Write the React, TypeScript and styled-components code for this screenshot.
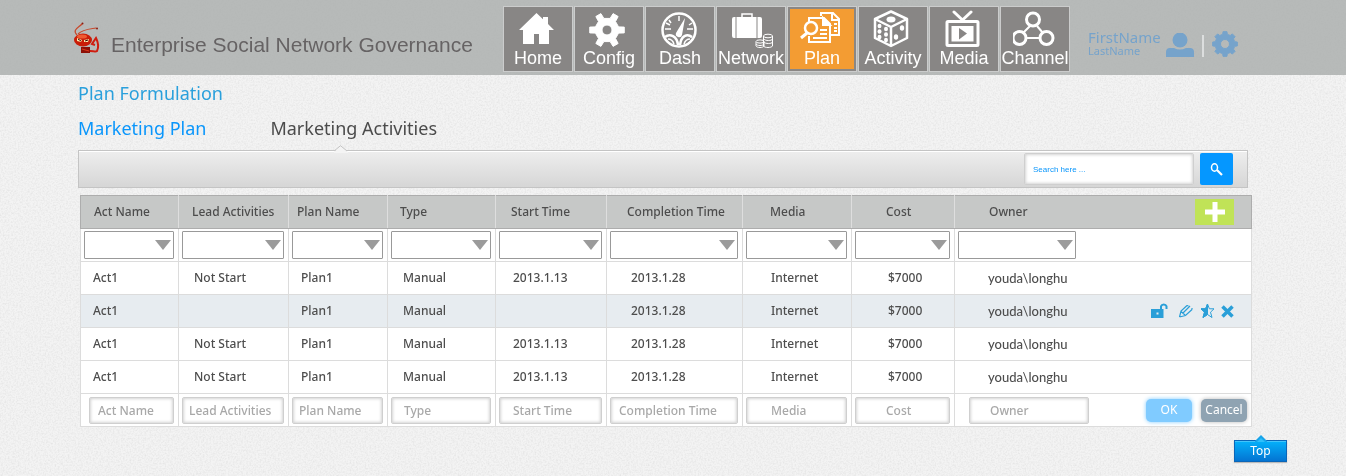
import React from "react";
import styled, { createGlobalStyle, css } from "styled-components";

const ui = `"Noto Sans", "Open Sans", sans-serif`;
const arial = `"Liberation Sans", Arial, sans-serif`;

const GlobalStyle = createGlobalStyle`
  *, *::before, *::after { box-sizing: border-box; }
  body { margin: 0; background: #f3f3f3; font-family: ${ui}; color: #4d4d4d; }
  button, input, select { font: inherit; color: inherit; margin: 0; }
  button { cursor: pointer; }
`;

const Page = styled.div`
  isolation: isolate;
`;

const GrainLayer = styled.svg`
  position: fixed;
  inset: 0;
  width: 100%;
  height: 100%;
  z-index: -1;
`;

const Header = styled.header`
  display: flex;
  align-items: flex-start;
  gap: 18px;
  height: 75px;
  padding: 6px 108px 0 72px;
  background: rgba(170, 173, 172, 0.82);
`;

const Brand = styled.div`
  display: flex;
  flex: 1;
  gap: 8px;
  padding-top: 14px;
`;

const BrandName = styled.span`
  padding-top: 12px;
  font: 21px/26px ${arial};
  color: #666364;
  white-space: nowrap;
`;

const Nav = styled.nav`
  display: flex;
  gap: 1px;
`;

const NavTile = styled.a<{ $active?: boolean }>`
  display: flex;
  flex-direction: column;
  align-items: center;
  width: 70px;
  height: 66px;
  padding-top: 3px;
  border: 1px solid #cbcccc;
  background: #888685;
  color: #fff;
  font: 18px/20px ${arial};
  text-decoration: none;
  white-space: nowrap;
  ${(p) =>
    p.$active &&
    css`
      background: #f39c33;
      box-shadow: inset 0 0 0 2px #8a8785;
    `}
`;

const User = styled.div`
  display: flex;
  align-items: flex-end;
  height: 51px;
  color: #76a3cb;
`;

const UserName = styled.div`
  display: flex;
  flex-direction: column;
  width: 78px;
  font-size: 15px;
  line-height: 16px;
`;

const LastName = styled.span`
  font-size: 11px;
  line-height: 12px;
`;

const Divider = styled.span`
  width: 2px;
  height: 22px;
  margin: 0 8px;
  background: #dcdede;
`;

const IconButton = styled.button`
  display: flex;
  padding: 0;
  border: 0;
  background: none;
  color: inherit;
`;

const Main = styled.main`
  padding: 6px 94px 0 78px;
`;

const Title = styled.h1`
  margin: 0 0 11px;
  font-size: 18px;
  line-height: 24px;
  font-weight: 400;
  color: #2aa0dc;
`;

const Tabs = styled.nav`
  display: flex;
  gap: 64px;
  margin-bottom: 10px;
`;

const Tab = styled.a<{ $active?: boolean }>`
  font-size: 18px;
  line-height: 24px;
  color: ${(p) => (p.$active ? "#0a96fb" : "#4b4b4b")};
  text-decoration: none;
`;

const Toolbar = styled.form`
  position: relative;
  display: flex;
  justify-content: flex-end;
  gap: 6px;
  height: 38px;
  margin: 0 4px 7px 0;
  padding: 2px 14px 0 0;
  border: 1px solid #c4c4c4;
  background: linear-gradient(#eeeeee, #d6d6d6);
  box-shadow: inset 0 1px 0 #fff;
`;

const Caret = styled.svg`
  position: absolute;
  left: 255px;
  top: -6px;
`;

const inset = css`
  border: 1px solid #cfcfcf;
  border-radius: 2px;
  background: #fff;
  box-shadow: inset 0 0 3px 1px #d4d4d4;
  outline: 0;
`;

const SearchBox = styled.input`
  ${inset}
  width: 170px;
  height: 32px;
  padding: 0 8px;
  font: 8px/12px ${arial};
  &::placeholder { color: #0a96fb; opacity: 1; }
`;

const SearchButton = styled.button`
  display: flex;
  align-items: center;
  justify-content: center;
  width: 33px;
  height: 32px;
  padding: 0;
  border: 0;
  border-radius: 2px;
  background: #0597ff;
`;

const Grid = styled.table`
  width: calc(100% - 2px);
  margin-left: 2px;
  table-layout: fixed;
  border-collapse: collapse;
  background: #fff;
  font-size: 12px;
  line-height: 16px;
`;

const HeadCell = styled.th<{ $indent: number }>`
  height: 33px;
  padding: 0 0 0 ${(p) => p.$indent}px;
  border: 1px solid #dedede;
  border-top-color: #adadad;
  border-bottom-color: #adadad;
  background: #c6c8c7;
  font-weight: 500;
  text-align: left;
  white-space: nowrap;
  &:first-child { border-left-color: #adadad; }
  &:last-child { border-right-color: #adadad; }
`;

const Cell = styled.td<{ $indent?: number }>`
  height: 33px;
  padding: 0 0 0 ${(p) => p.$indent ?? 3}px;
  border: 1px solid #dcdcdc;
  font-weight: 500;
  white-space: nowrap;
`;

const Row = styled.tr<{ $selected?: boolean }>`
  background: ${(p) => (p.$selected ? "#e7ecf0" : "#fff")};
`;

const Spread = styled.div<{ $end: number }>`
  display: flex;
  align-items: center;
  justify-content: space-between;
  padding-right: ${(p) => p.$end}px;
`;

const Owner = styled.span`
  font-family: Lato, sans-serif;
  font-size: 13px;
`;

const Actions = styled.div`
  display: flex;
  align-items: center;
  gap: 6px;
  color: #2a9fd8;
`;

const AddButton = styled.button`
  display: flex;
  align-items: center;
  justify-content: center;
  width: 39px;
  height: 26px;
  padding: 0;
  border: 0;
  background: #c0e357;
`;

const SelectWrap = styled.div<{ $fixed?: boolean }>`
  position: relative;
  width: ${(p) => (p.$fixed ? "118px" : "calc(100% - 4px)")};
  &::after {
    content: "";
    position: absolute;
    right: 3px;
    top: 9px;
    border: 8px solid transparent;
    border-top: 10px solid #9b9b9b;
    border-bottom: 0;
    pointer-events: none;
  }
`;

const Filter = styled.select`
  display: block;
  width: 100%;
  height: 28px;
  border: 1px solid #999;
  border-radius: 1px;
  background: #fff;
  appearance: none;
`;

const EntryBox = styled.input<{ $indent: number; $fixed?: boolean }>`
  ${inset}
  display: block;
  width: ${(p) => (p.$fixed ? "120px" : "calc(100% - 4px)")};
  height: 27px;
  padding: 0 0 0 ${(p) => p.$indent}px;
  &::placeholder { color: #a8a8a8; opacity: 1; }
`;

const FormActions = styled.div`
  display: flex;
  gap: 9px;
`;

const FormButton = styled.button<{ $primary?: boolean }>`
  width: 46px;
  height: 23px;
  padding: 0;
  border: 0;
  border-radius: 5px;
  background: ${(p) => (p.$primary ? "#80cbff" : "#8fa3b2")};
  box-shadow: 0 0 4px ${(p) => (p.$primary ? "#80cbff" : "#b9b9b9")};
  color: #fff;
  font-size: 12px;
  line-height: 16px;
  font-weight: 400;
`;

const Footer = styled.footer`
  display: flex;
  justify-content: flex-end;
  padding: 8px 59px 14px 0;
`;

const TopLink = styled.a`
  display: flex;
  flex-direction: column;
  align-items: center;
  width: 53px;
  color: #fff;
  font-size: 12px;
  line-height: 20px;
  text-align: center;
  text-decoration: none;
`;

const TopLabel = styled.span`
  width: 100%;
  border: 1px solid #0b66b8;
  background: linear-gradient(#04b1fb, #0474d2);
  box-shadow: inset 0 1px 0 #43c4fb, 0 1px 1px #bbb;
`;

const TopCaret = styled.svg`
  position: relative;
  z-index: 1;
  margin-bottom: -2px;
`;

function gearPath(cx: number, cy: number, teeth: number, outer: number, inner: number, hole: number, tip: number, root: number) {
  const points: string[] = [];
  const step = (Math.PI * 2) / teeth;
  for (let i = 0; i < teeth; i++) {
    const mid = i * step;
    [[inner, -root], [outer, -tip], [outer, tip], [inner, root]].forEach(([r, a]) => {
      points.push(`${(cx + r * Math.cos(mid + a * step)).toFixed(2)} ${(cy + r * Math.sin(mid + a * step)).toFixed(2)}`);
    });
  }
  return `M${points.join("L")}ZM${cx - hole} ${cy}a${hole} ${hole} 0 1 0 ${hole * 2} 0a${hole} ${hole} 0 1 0 ${-hole * 2} 0Z`;
}

const HomeIcon = () => (
  <path fill="#fff" d="M3 20 20.500 3l6.500 6.300V7h5v7l6 6h-5v14H23V24h-5v10H7V20Z" />
);
const ConfigIcon = () => (
  <path fill="#fff" stroke="#fff" strokeLinejoin="round" fillRule="evenodd" d={gearPath(20, 20, 6, 17.5, 12, 5, 0.16, 0.25)} />
);
const DashIcon = () => (
  <g fill="none" stroke="#fff" strokeWidth="2">
    <circle cx="21" cy="20" r="16.500" strokeWidth="2.500" />
    <path d="M21 6v5M11 10l2 3M7 19h6M29 19h6M8 13l4 2M31 26l3 1M31 15l3-2" strokeWidth="1.500" />
    <path fill="#fff" stroke="none" d="M27 8 24 25a3 3 0 0 1-6-2Z" />
    <path d="M7 27c5-4 12-1 13 8M34 27c-5-4-11-1-12 8" strokeWidth="2.500" />
    <path d="M10 29c3 0 5 2 6 5M32 29c-3 0-5 2-6 5" strokeWidth="1.500" />
  </g>
);
const NetworkIcon = () => (
  <g fill="#fff">
    <path fill="none" stroke="#fff" strokeWidth="1.500" d="M13 8V4h10v4" />
    <path d="M5 7h1.500v21H5a2 2 0 0 1-2-2V9a2 2 0 0 1 2-2ZM7.500 7h20v21h-20ZM28.500 7H31a2 2 0 0 1 2 2v17a2 2 0 0 1-2 2h-2.500Z" />
    <path fill="#888685" d="M33 22h11v16H26v-9h7Z" />
    <g fill="none" stroke="#fff">
      <ellipse cx="39" cy="26" rx="4.500" ry="1.800" />
      <path d="M34.500 26v10c1 2 8 2 9 0V26M35 29c1 2 8 2 8.500 0M35 32c1 2 8 2 8.500 0" />
      <ellipse cx="31" cy="31.500" rx="4" ry="1.600" />
      <path d="M27 32v4c1 2 7 2 8 0v-4M27 34c1 2 7 2 8 0" />
    </g>
  </g>
);
const PlanIcon = () => (
  <g fill="none" stroke="#fff" strokeWidth="2">
    <path d="M21 6V3h12l6 6v16h-8M32 3v7h7M34 14h3M34 18h3M34 21h3" />
    <path fill="#f39c33" d="M9 14V8h15l6 6v18H9v-6" />
    <path fill="#fff" d="M23 8v7h7Z" />
    <path d="M20 20h7M20 24h7M13 28h14" strokeWidth="1.800" />
    <circle fill="#f39c33" cx="11" cy="18" r="6" strokeWidth="2.500" />
    <path d="m7 23-6 5" strokeWidth="3" />
  </g>
);
const ActivityIcon = () => (
  <g>
    <path fill="none" stroke="#fff" strokeWidth="2.500" strokeLinejoin="round" d="M20 1.500 36 9v19l-16 8L4 28V9ZM4 9l16 8 16-8M20 17v19" />
    <g fill="#fff">
      <ellipse cx="20" cy="9.500" rx="4.500" ry="3" />
      <ellipse cx="8.500" cy="16" rx="2" ry="2.200" /><ellipse cx="15" cy="19" rx="2" ry="2.200" />
      <ellipse cx="8.500" cy="21.500" rx="2" ry="2.200" /><ellipse cx="15" cy="24.500" rx="2" ry="2.200" />
      <ellipse cx="8.500" cy="27" rx="2" ry="2.200" /><ellipse cx="15" cy="30" rx="2" ry="2.200" />
      <ellipse cx="31" cy="18" rx="2.200" ry="2.800" /><ellipse cx="25" cy="27" rx="2.200" ry="2.800" />
    </g>
  </g>
);
const MediaIcon = () => (
  <g fill="none" stroke="#fff" strokeWidth="3">
    <path d="m12 2 8.500 8L29 2" strokeLinecap="round" />
    <rect x="5" y="11.500" width="31" height="24" rx="1" />
    <rect x="9.500" y="16" width="22" height="15.500" fill="#fff" stroke="none" />
    <path fill="#888685" stroke="none" d="m17 18 8 5.500-8 6Z" />
  </g>
);
const ChannelIcon = () => (
  <g fill="none" stroke="#fff" strokeWidth="3">
    <path d="m17 16-7 7M24 16l6 7M13 28h14" strokeWidth="2" />
    <circle cx="20" cy="9.500" r="6.500" /><circle cx="6.500" cy="28" r="6.500" /><circle cx="33.500" cy="28" r="6.500" />
  </g>
);

const navItems = [
  { label: "Home", Icon: HomeIcon },
  { label: "Config", Icon: ConfigIcon },
  { label: "Dash", Icon: DashIcon },
  { label: "Network", Icon: NetworkIcon },
  { label: "Plan", Icon: PlanIcon, active: true },
  { label: "Activity", Icon: ActivityIcon },
  { label: "Media", Icon: MediaIcon },
  { label: "Channel", Icon: ChannelIcon },
];

const columns = [
  { label: "Act Name", width: 98, head: 13, body: 12, lead: 8, entry: 8 },
  { label: "Lead Activities", width: 110, head: 13, body: 15, lead: 3, entry: 6 },
  { label: "Plan Name", width: 99, head: 8, body: 12, lead: 3, entry: 6 },
  { label: "Type", width: 108, head: 12, body: 15, lead: 3, entry: 12 },
  { label: "Start Time", width: 111, head: 15, body: 17, lead: 3, entry: 13 },
  { label: "Completion Time", width: 136, head: 20, body: 24, lead: 3, entry: 8 },
  { label: "Media", width: 109, head: 27, body: 28, lead: 3, entry: 24 },
  { label: "Cost", width: 103, head: 34, body: 36, lead: 3, entry: 30 },
];

const rows = [
  ["Act1", "Not Start", "Plan1", "Manual", "2013.1.13", "2013.1.28", "Internet", "$7000"],
  ["Act1", "", "Plan1", "Manual", "", "2013.1.28", "Internet", "$7000"],
  ["Act1", "Not Start", "Plan1", "Manual", "2013.1.13", "2013.1.28", "Internet", "$7000"],
  ["Act1", "Not Start", "Plan1", "Manual", "2013.1.13", "2013.1.28", "Internet", "$7000"],
];

const Logo = () => (
  <svg width="31" height="36" viewBox="0 0 31 36" fill="none" aria-hidden="true">
    <path d="M5 15c-5-5 1-7 5-11M6 14c5-5 12-5 18-6" stroke="#c8492c" strokeWidth="1.200" />
    <circle cx="10.500" cy="3.500" r="1" fill="#8c1c10" /><circle cx="25" cy="8.500" r="1" fill="#8c1c10" />
    <ellipse cx="11" cy="20" rx="9" ry="6.500" fill="#c91d08" />
    <ellipse cx="10" cy="16.500" rx="5" ry="2" fill="#ef5a31" />
    <path d="m5 18 5 2-1 2-4-1ZM12 20l5-1-1 3h-4Z" fill="#ffe7a8" />
    <path d="m6 19 3 2M13 21l3-1" stroke="#3a0805" />
    <path d="M9 27h9v6H9Z" fill="#8d1007" /><path d="m10 29 7 2" stroke="#e43b1c" />
    <path d="M18 31c3 0 6 1 7 0 2-4 1-9-1-13l-4 6 3 1" stroke="#cf1d10" strokeWidth="2" />
  </svg>
);

const RowActions = () => (
  <Actions>
    <IconButton type="button" aria-label="Unlock">
      <svg width="21" height="18" viewBox="0 0 21 18"><path fill="currentColor" fillRule="evenodd" d="M0 7h9V4a4 4 0 0 1 7.500 0v3h-2V4.500a2 2 0 0 0-3.500 0V7h1.500v9H0Zm5.500 3.500v2h2v-2Z" /></svg>
    </IconButton>
    <IconButton type="button" aria-label="Edit">
      <svg width="16" height="16" viewBox="0 0 16 16" fill="none" stroke="currentColor" strokeWidth="1.200"><path d="m1.500 14 1.500-6 6-5.500M1.500 14l6-1.500 6.500-6M5 10l7-7M9 2.500l1.500.5M14 6.500V5M3 8.500 7 12" /></svg>
    </IconButton>
    <IconButton type="button" aria-label="Favourite">
      <svg width="15" height="16" viewBox="0 0 15 16" stroke="currentColor" fill="none"><path d="m7.500 1 1.900 4.800H14l-3.500 3.400L12 14.500l-4.500-3-4.500 3 1.500-5.300L1 5.800h4.600Z" /><path fill="currentColor" d="M7.500 1v10.500l-4.500 3 1.500-5.300L1 5.800h4.600Z" /></svg>
    </IconButton>
    <IconButton type="button" aria-label="Delete">
      <svg width="13" height="13" viewBox="0 0 13 13" stroke="currentColor" strokeWidth="3.500"><path d="m1.500 1.500 10 10M11.500 1.500l-10 10" /></svg>
    </IconButton>
  </Actions>
);

export default function App() {
  return (
    <Page id="top">
      <GlobalStyle />
      <GrainLayer aria-hidden="true">
        <filter id="grain" x="0" y="0" width="100%" height="100%">
          <feTurbulence type="fractalNoise" baseFrequency="0.6" numOctaves="2" seed="4" />
          <feColorMatrix values="0 0 0 0 0.5  0 0 0 0 0.5  0 0 0 0 0.5  0.5 0 0 0 -0.2" />
        </filter>
        <rect width="100%" height="100%" filter="url(#grain)" />
      </GrainLayer>
      <Header>
        <Brand>
          <Logo />
          <BrandName>Enterprise Social Network Governance</BrandName>
        </Brand>
        <Nav aria-label="Main">
          {navItems.map(({ label, Icon, active }) => (
            <NavTile key={label} href="#top" $active={active} aria-current={active ? "page" : undefined}>
              <svg width="44" height="38" viewBox="0 0 44 38" aria-hidden="true"><Icon /></svg>
              {label}
            </NavTile>
          ))}
        </Nav>
        <User>
          <UserName>
            FirstName
            <LastName>LastName</LastName>
          </UserName>
          <IconButton type="button" aria-label="Profile">
            <svg width="28" height="24" viewBox="0 0 28 24"><circle cx="14" cy="7" r="7.500" fill="#76a3cb" /><path fill="#76a3cb" d="M0 24v-5a4 4 0 0 1 4-4h4q6 3 12 0h4a4 4 0 0 1 4 4v5Z" /></svg>
          </IconButton>
          <Divider />
          <IconButton type="button" aria-label="Settings">
            <svg width="26" height="26" viewBox="0 0 26 26"><path fill="#76a3cb" stroke="#76a3cb" strokeLinejoin="round" fillRule="evenodd" d={gearPath(13, 13, 8, 12.5, 10, 4.5, 0.2, 0.3)} /></svg>
          </IconButton>
        </User>
      </Header>
      <Main>
        <Title>Plan Formulation</Title>
        <Tabs aria-label="Plans">
          <Tab href="#top" $active>Marketing Plan</Tab>
          <Tab href="#top">Marketing Activities</Tab>
        </Tabs>
        <Toolbar onSubmit={(e) => e.preventDefault()}>
          <Caret width="14" height="8" viewBox="0 0 14 8" aria-hidden="true"><path d="M0 7 7 .7 14 7v1H0Z" fill="#f4f4f4" /><path d="M0 6 6.500.7 13 6" fill="none" stroke="#c4c4c4" /></Caret>
          <SearchBox type="text" aria-label="Search" placeholder="Search here ..." />
          <SearchButton type="submit" aria-label="Search">
            <svg width="13" height="13" viewBox="0 0 13 13" fill="none" stroke="#fff"><ellipse cx="4.500" cy="4.500" rx="3" ry="3.700" strokeWidth="1.500" /><path d="m7 7 5 5" strokeWidth="2.200" /></svg>
          </SearchButton>
        </Toolbar>
        <Grid>
          <colgroup>
            {columns.map((c) => <col key={c.label} width={c.width} />)}
            <col />
          </colgroup>
          <thead>
            <tr>
              {columns.map((c) => <HeadCell key={c.label} scope="col" $indent={c.head}>{c.label}</HeadCell>)}
              <HeadCell scope="col" $indent={34}>
                <Spread $end={17}>
                  Owner
                  <AddButton type="button" aria-label="Add activity">
                    <svg width="20" height="20" viewBox="0 0 20 20"><path fill="#fff" d="M7.500 0h5v7.500H20v5h-7.500V20h-5v-7.500H0v-5h7.500Z" /></svg>
                  </AddButton>
                </Spread>
              </HeadCell>
            </tr>
          </thead>
          <tbody>
            <Row>
              {[...columns.map((c) => c.label), "Owner"].map((label) => (
                <Cell key={label}>
                  <SelectWrap $fixed={label === "Owner"}>
                    <Filter aria-label={`Filter by ${label}`} defaultValue=""><option value="" /></Filter>
                  </SelectWrap>
                </Cell>
              ))}
            </Row>
            {rows.map((row, i) => (
              <Row key={i} $selected={i === 1}>
                {row.map((text, j) => <Cell key={j} $indent={columns[j].body}>{text}</Cell>)}
                <Cell $indent={33}>
                  <Spread $end={17}>
                    <Owner>youda\longhu</Owner>
                    {i === 1 && <RowActions />}
                  </Spread>
                </Cell>
              </Row>
            ))}
            <Row>
              {columns.map((c) => (
                <Cell key={c.label} $indent={c.lead}>
                  <EntryBox type="text" aria-label={c.label} placeholder={c.label} $indent={c.entry} />
                </Cell>
              ))}
              <Cell $indent={14}>
                <Spread $end={4}>
                  <EntryBox type="text" aria-label="Owner" placeholder="Owner" $indent={20} $fixed />
                  <FormActions>
                    <FormButton type="button" $primary>OK</FormButton>
                    <FormButton type="button">Cancel</FormButton>
                  </FormActions>
                </Spread>
              </Cell>
            </Row>
          </tbody>
        </Grid>
      </Main>
      <Footer>
        <TopLink href="#top">
          <TopCaret width="12" height="7" viewBox="0 0 12 7" aria-hidden="true"><path d="M0 6 6 0l6 6v1H0Z" fill="#18a4ea" /><path d="M2 7l4-4 4 4Z" fill="#2fc0fb" /></TopCaret>
          <TopLabel>Top</TopLabel>
        </TopLink>
      </Footer>
    </Page>
  );
}
